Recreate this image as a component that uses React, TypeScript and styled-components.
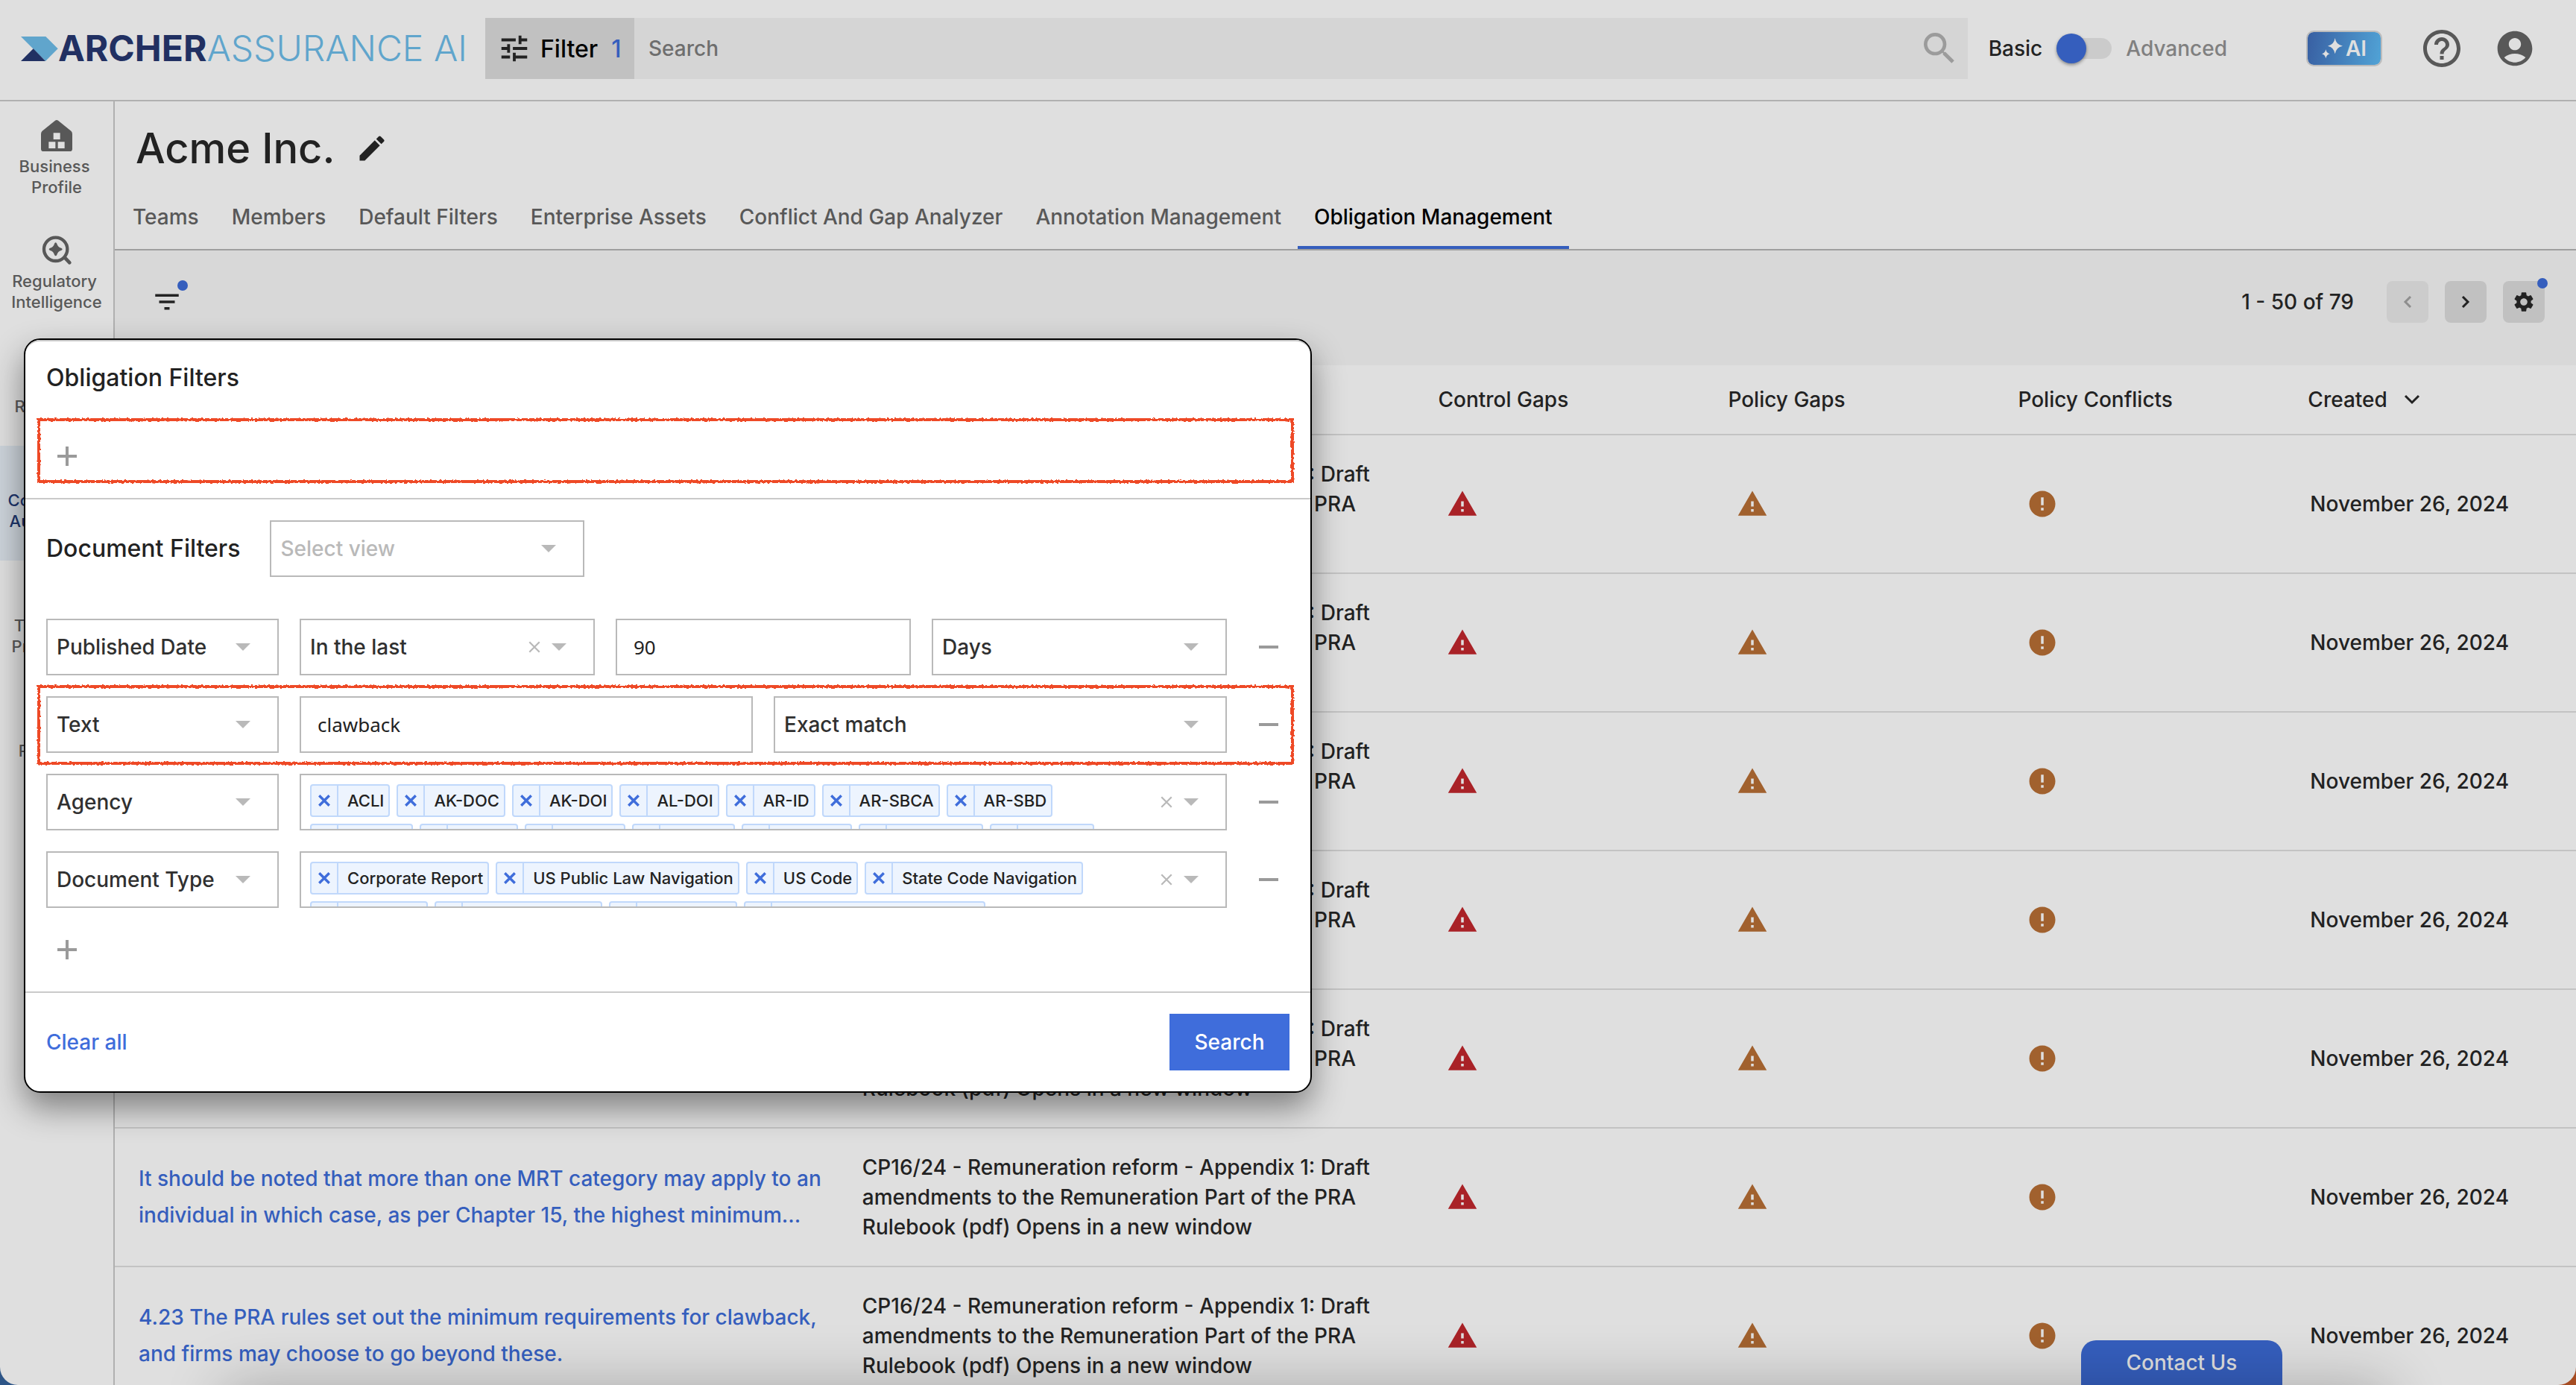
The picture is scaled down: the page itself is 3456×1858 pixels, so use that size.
import React from "react";
import styled, { createGlobalStyle, css } from "styled-components";
import {
  MdAccountCircle,
  MdEdit,
  MdError,
  MdFilterList,
  MdHelpOutline,
  MdSearch,
  MdSettings,
  MdTune,
  MdWarning,
} from "react-icons/md";
import { LuBookOpen, LuClipboardList, LuFileText, LuUsers } from "react-icons/lu";

const color = {
  page: "#dfdfdf",
  toolbar: "#d8d8d8",
  ink: "#222222",
  muted: "#585858",
  rule: "#c3c3c3",
  blue: "#355ebd",
  brightBlue: "#3f6ddb",
  red: "#a92227",
  amber: "#a1612e",
  field: "#b9b9b9",
  highlight: "#ee4a25",
};

const GlobalStyle = createGlobalStyle`
  *, *::before, *::after { box-sizing: border-box; }
  body {
    margin: 0;
    background: linear-gradient(90deg, #2d5587 0%, #2d5587 50%, #a64c22 50%, #a64c22 100%);
  }
  body, button, input, select {
    font-family: Inter, "Liberation Sans", sans-serif;
    font-size: 28px;
    font-weight: 500;
    color: ${color.ink};
  }
  button { border: 0; padding: 0; background: none; cursor: pointer; }
  svg { display: block; flex: none; }
`;

const Window = styled.div`
  position: relative;
  display: flex;
  flex-direction: column;
  height: 100vh;
  overflow: hidden;
  border-radius: 0 0 24px 24px;
  background: ${color.page};
`;

/* ---------- Header ---------- */

const Header = styled.header`
  display: flex;
  align-items: center;
  flex: none;
  padding: 24px 54px 28px 28px;
  border-bottom: 2px solid #b0b0b0;
`;

const Logo = styled.a`
  display: flex;
  align-items: center;
  flex: none;
  width: 623px;
  color: #60a5cc;
  font-size: 48px;
  font-weight: 300;
  line-height: 82px;
  text-decoration: none;
  white-space: nowrap;

  strong {
    color: #213062;
    font-weight: 700;
  }
`;

const SearchBar = styled.form`
  display: flex;
  flex: 1;
  height: 82px;
  background: #d5d5d5;
`;

const FilterButton = styled.button`
  display: flex;
  align-items: center;
  gap: 12px;
  width: 200px;
  padding-left: 16px;
  background: #c1c1c1;
  color: #000;
  font-size: 32px;

  span {
    margin-left: 6px;
    color: ${color.blue};
  }
`;

const SearchInput = styled.input`
  flex: 1;
  min-width: 0;
  padding: 0 19px;
  border: 0;
  background: none;

  &::placeholder {
    color: #6e6e6e;
    opacity: 1;
  }
`;

const SearchSubmit = styled.button`
  padding: 0 10px;
  color: #9b9b9b;
`;

const ModeSwitch = styled.label`
  display: flex;
  align-items: center;
  gap: 19px;
  margin: 0 106px 0 28px;
`;

const ModeName = styled.span<{ $active?: boolean }>`
  color: ${(p) => (p.$active ? color.ink : "#808080")};
`;

const Toggle = styled.input`
  appearance: none;
  display: flex;
  align-items: center;
  width: 74px;
  height: 28px;
  margin: 0;
  border-radius: 14px;
  background: #cbcbcb;

  &::before {
    content: "";
    width: 40px;
    height: 40px;
    border-radius: 50%;
    background: ${color.blue};
    box-shadow: 0 2px 4px rgba(0, 0, 0, 0.4);
  }
`;

const AiButton = styled.button`
  display: flex;
  align-items: center;
  justify-content: center;
  gap: 4px;
  width: 102px;
  height: 48px;
  border: 2px solid #bcbcbc;
  border-radius: 10px;
  background: linear-gradient(100deg, #385fa2, #51a3d6);
  background-clip: padding-box;
  color: ${color.page};
  font-weight: 600;
`;

const HeaderIcons = styled.div`
  display: flex;
  align-items: center;
  gap: 40px;
  margin-left: 50px;

  button { color: ${color.muted}; }
`;

/* ---------- Side navigation ---------- */

const Body = styled.div`
  display: flex;
  flex: 1;
  min-height: 0;
`;

const SideNav = styled.nav`
  flex: none;
  width: 154px;
  border-right: 2px solid #b0b0b0;
`;

const SideLink = styled.a<{ $active?: boolean }>`
  display: flex;
  flex-direction: column;
  align-items: center;
  justify-content: center;
  gap: 6px;
  height: 154px;
  background: ${(p) => (p.$active ? "#ccd3da" : "transparent")};
  color: ${(p) => (p.$active ? "#1d356b" : color.muted)};
  font-size: 22px;
  line-height: 28px;
  text-align: center;
  text-decoration: none;

  span {
    max-width: 148px;
    white-space: break-spaces;
  }
`;

/* ---------- Main area ---------- */

const Main = styled.main`
  flex: 1;
  min-width: 0;
`;

const TitleRow = styled.div`
  display: flex;
  align-items: center;
  gap: 28px;
  padding: 27px 28px 0;
`;

const Title = styled.h1`
  margin: 0;
  font-size: 56px;
  font-weight: 500;
  line-height: 72px;
`;

const Tabs = styled.nav`
  display: flex;
  padding: 36px 2px 0;
  border-bottom: 2px solid #9f9f9f;
`;

const Tab = styled.a<{ $active?: boolean }>`
  padding: 0 22px 19px;
  border-bottom: 4px solid ${(p) => (p.$active ? color.blue : "transparent")};
  color: ${(p) => (p.$active ? "#000" : color.muted)};
  line-height: 40px;
  text-decoration: none;
`;

const Toolbar = styled.div`
  display: flex;
  align-items: center;
  gap: 22px;
  padding: 41px 42px 57px 49px;
  background: ${color.toolbar};
`;

const IconButton = styled.button<{ $filled?: boolean }>`
  position: relative;
  display: flex;
  align-items: center;
  justify-content: center;
  width: ${(p) => (p.$filled ? 56 : 42)}px;
  height: 56px;
  border-radius: 8px;
  background: ${(p) => (p.$filled ? "#c1c1c1" : "none")};

  &:disabled {
    background: #cccccc;
    color: #8e8e8e;
  }
`;

const Dot = styled.i<{ $corner?: boolean }>`
  position: absolute;
  top: ${(p) => (p.$corner ? -4 : -1)}px;
  right: ${(p) => (p.$corner ? -4 : -7)}px;
  width: 14px;
  height: 14px;
  border-radius: 50%;
  background: ${color.blue};
`;

const PageRange = styled.span`
  margin: 0 22px 0 auto;
`;

const Table = styled.table`
  width: 100%;
  table-layout: fixed;
  border-collapse: separate;
  border-spacing: 0;

  th {
    height: 94px;
    padding: 0 16px 0 32px;
    border-bottom: 2px solid ${color.rule};
    font-weight: 500;
    text-align: left;
  }

  td {
    height: 186px;
    padding: 0 16px 0 32px;
    border-bottom: 2px solid ${color.rule};
    line-height: 40px;
  }
`;

const Col = styled.col<{ $share: string }>`
  width: ${(p) => p.$share};
`;

const SortButton = styled.button`
  display: flex;
  align-items: center;
  gap: 22px;
`;

const ObligationLink = styled.a`
  color: ${color.blue};
  line-height: 49px;
  text-decoration: none;
`;

const DocumentName = styled.div`
  max-width: 700px;
`;

const Severity = styled.span<{ $tone: string }>`
  display: block;
  margin-left: 12px;
  color: ${(p) => p.$tone};
`;

const CreatedDate = styled.time`
  margin-left: 3px;
`;

/* ---------- Filter dialog ---------- */

const Dialog = styled.section`
  position: absolute;
  top: 454px;
  left: 32px;
  width: 50%;
  border: 2px solid #000;
  border-radius: 22px;
  background: #fff;
  box-shadow: 0 20px 44px rgba(0, 0, 0, 0.43);
`;

const DialogSection = styled.div`
  padding: 28px;
  border-bottom: 2px solid #cacaca;

  &:first-child {
    border-top: 2px solid #cacaca;
    border-radius: 20px 20px 0 0;
  }
`;

const DialogHeading = styled.h2`
  margin: 0;
  font-size: 32px;
  font-weight: 500;
  line-height: 42px;
`;

const AddRow = styled.div<{ $spaced?: boolean }>`
  position: relative;
  display: flex;
  margin-top: ${(p) => (p.$spaced ? 56 : 28)}px;
`;

const ViewRow = styled.div`
  display: flex;
  align-items: center;
  gap: 40px;
  margin-bottom: 56px;
`;

const SmallButton = styled.button`
  display: flex;
  align-items: center;
  justify-content: center;
  width: 56px;
  height: 56px;
  color: #9a9a9a;
`;

const FilterRows = styled.div`
  display: flex;
  flex-direction: column;
  gap: 28px;
`;

const FilterRow = styled.div`
  position: relative;
  display: flex;
  align-items: center;
  gap: 28px;
`;

const Field = styled.div<{ $width?: string }>`
  display: flex;
  align-items: center;
  height: 76px;
  overflow: hidden;
  border: 2px solid ${color.field};
  color: ${color.field};
  ${(p) =>
    p.$width
      ? css`flex: none; width: ${p.$width};`
      : css`flex: 1; min-width: 0;`}
`;

const Select = styled.select<{ $placeholder?: boolean }>`
  appearance: none;
  flex: 1;
  min-width: 0;
  height: 72px;
  padding: 0 0 0 12px;
  border: 0;
  background: none;
  color: ${(p) => (p.$placeholder ? "#b9b9b9" : "#303030")};
`;

const TextInput = styled.input`
  width: 100%;
  height: 72px;
  padding: 0 22px;
  border: 0;
  background: none;
  font-family: "Noto Sans", sans-serif;
  font-size: 26px;
  font-weight: 400;
`;

const Clear = styled.button`
  margin-right: 14px;
  color: ${color.field};
`;

const Arrow = styled.i`
  width: 0;
  height: 0;
  margin-right: 36px;
  border: 10px solid transparent;
  border-top-color: ${color.field};
  border-bottom: 0;
`;

const Tags = styled.div`
  display: flex;
  flex: 1;
  flex-direction: column;
  gap: 9px;
  align-self: flex-start;
  min-width: 0;
  padding: 12px;
`;

const TagLine = styled.ul`
  display: flex;
  gap: 9px;
  margin: 0;
  padding: 0;
  list-style: none;
`;

const Tag = styled.li`
  display: flex;
  height: 44px;
  border: 2px solid #c0d8fb;
  border-radius: 4px;
  background: #edf4fe;
  color: ${color.ink};
  font-size: 22px;
  line-height: 40px;
  white-space: nowrap;

  span { padding: 0 6px 0 12px; }
`;

const TagRemove = styled.button`
  display: flex;
  align-items: center;
  justify-content: center;
  width: 36px;
  border-right: 2px solid #c0d8fb;
  color: ${color.brightBlue};
`;

const DialogFooter = styled.footer`
  display: flex;
  align-items: center;
  justify-content: space-between;
  padding: 28px;
`;

const ClearAll = styled.button`
  color: ${color.brightBlue};
`;

const SearchButton = styled.button`
  width: 161px;
  height: 76px;
  background: ${color.brightBlue};
  color: #fff;
`;

const Marker = styled.svg<{ $tall?: boolean }>`
  position: absolute;
  top: ${(p) => (p.$tall ? -15 : -23)}px;
  left: -12px;
  width: calc(100% + 18px);
  height: ${(p) => (p.$tall ? 107 : 87)}px;
  overflow: visible;
  pointer-events: none;
`;

/* ---------- Bottom edge ---------- */

const ContactButton = styled.button`
  position: absolute;
  right: 394px;
  bottom: 0;
  width: 270px;
  height: 60px;
  border-radius: 20px 20px 0 0;
  background: ${color.blue};
  color: ${color.page};
`;

const BottomShade = styled.div`
  position: absolute;
  right: 250px;
  bottom: -200px;
  left: 300px;
  height: 200px;
  box-shadow: 0 0 80px rgba(0, 0, 0, 0.24);
  pointer-events: none;
`;

/* ---------- Drawings ---------- */

const LogoMark = () => (
  <svg width="50" height="33" viewBox="0 0 150 99" aria-hidden="true">
    <path d="M0 0H100L149 49L99 99Z" fill="#60a5cc" />
    <path d="M50 49L99 99H0Z" fill="#213062" />
  </svg>
);

const HomeIcon = () => (
  <svg width="42" height="42" viewBox="0 0 126 126" aria-hidden="true">
    <path
      fill="currentColor"
      fillRule="evenodd"
      d="M57 2Q63 -2 69 2L121 44Q126 49 126 56V116Q126 126 116 126H10Q0 126 0 116V56Q0 49 5 44ZM50 52V78H77V52ZM31 88V114H58V88ZM68 88V114H95V88Z"
    />
  </svg>
);

const IntelligenceIcon = () => (
  <svg width="42" height="42" viewBox="0 0 126 126" fill="none" aria-hidden="true">
    <circle cx="59" cy="58" r="47" stroke="currentColor" strokeWidth="13" />
    <path d="M95 91L115 112" stroke="currentColor" strokeWidth="14" strokeLinecap="round" />
    <path
      fill="currentColor"
      d="M59 31Q62 31 64 36Q68 50 81 53Q86 55 86 58Q86 61 81 63Q68 67 64 80Q62 85 59 85Q56 85 54 80Q50 67 37 63Q32 61 32 58Q32 55 37 53Q50 50 54 36Q56 31 59 31Z"
    />
  </svg>
);

const SparkleIcon = () => (
  <svg width="28" height="28" viewBox="0 0 84 84" fill="currentColor" aria-hidden="true">
    <path d="M53 0Q57 27 84 32Q57 37 53 64Q49 37 24 32Q49 27 53 0Z" />
    <path d="M16 46Q19 61 32 64Q19 67 16 82Q13 67 0 64Q13 61 16 46Z" />
  </svg>
);

const Chevron = ({ d, w, h }: { d: string; w: number; h: number }) => (
  <svg width={w} height={h} viewBox={`0 0 ${w} ${h}`} fill="none" aria-hidden="true">
    <path d={d} stroke="currentColor" strokeWidth="3" />
  </svg>
);

const CrossIcon = ({ size, weight }: { size: number; weight: number }) => (
  <svg width={size} height={size} viewBox="0 0 16 16" fill="none" aria-hidden="true">
    <path d="M2 2L14 14M14 2L2 14" stroke="currentColor" strokeWidth={weight} />
  </svg>
);

const PlusIcon = () => (
  <svg width="26" height="26" viewBox="0 0 26 26" fill="none" aria-hidden="true">
    <path d="M0 13H26M13 0V26" stroke="currentColor" strokeWidth="4" />
  </svg>
);

const MinusIcon = () => (
  <svg width="26" height="4" viewBox="0 0 26 4" fill="none" aria-hidden="true">
    <path d="M0 2H26" stroke="currentColor" strokeWidth="4" />
  </svg>
);

const RoughMarker = ({ id, tall }: { id: string; tall?: boolean }) => (
  <Marker $tall={tall} aria-hidden="true">
    <filter id={id} x="-2%" y="-10%" width="104%" height="120%">
      <feTurbulence type="fractalNoise" baseFrequency="0.3" numOctaves="2" seed="4" />
      <feDisplacementMap
        in="SourceGraphic"
        scale="4"
        xChannelSelector="R"
        yChannelSelector="G"
      />
    </filter>
    <rect
      x="2"
      y="2"
      width="calc(100% - 4px)"
      height={tall ? 103 : 83}
      fill="none"
      stroke={color.highlight}
      strokeWidth="4"
      filter={`url(#${id})`}
    />
  </Marker>
);

/* ---------- Data ---------- */

const sideItems = [
  { label: "Business Profile", icon: <HomeIcon /> },
  { label: "Regulatory Intelligence", icon: <IntelligenceIcon /> },
  { label: "Repository", icon: <LuBookOpen size={42} /> },
  { label: "Compliance Automation Tools", icon: <LuClipboardList size={42} />, active: true },
  { label: "Templates Procedures", icon: <LuUsers size={42} /> },
  { label: "Reporting", icon: <LuFileText size={42} /> },
];

const tabs = [
  "Teams",
  "Members",
  "Default Filters",
  "Enterprise Assets",
  "Conflict And Gap Analyzer",
  "Annotation Management",
  "Obligation Management",
];

const documentName =
  "CP16/24 - Remuneration reform - Appendix 1: Draft amendments to the Remuneration Part of the PRA Rulebook (pdf) Opens in a new window";

const mrtNote =
  "It should be noted that more than one MRT category may apply to an individual in which case, as per Chapter 15, the highest minimum...";

const clawbackNote =
  "4.23 The PRA rules set out the minimum requirements for clawback, and firms may choose to go beyond these.";

const obligations = [mrtNote, clawbackNote, mrtNote, clawbackNote, mrtNote, mrtNote, clawbackNote];

const agencies = [
  ["ACLI", "AK-DOC", "AK-DOI", "AL-DOI", "AR-ID", "AR-SBCA", "AR-SBD"],
  ["AZ-DIFI", "AZ-DFI", "AZ-DOI", "CA-DOI", "CA-DFPI", "CA-DMHC", "CO-DOI"],
];

const documentTypes = [
  ["Corporate Report", "US Public Law Navigation", "US Code", "State Code Navigation"],
  ["Guidance", "Final Regulation", "Legislation", "State Register Navigation"],
];

/* ---------- Parts ---------- */

function SelectField({
  label,
  value,
  width,
  placeholder,
  clearable,
}: {
  label: string;
  value: string;
  width?: string;
  placeholder?: boolean;
  clearable?: boolean;
}) {
  return (
    <Field $width={width}>
      <Select aria-label={label} $placeholder={placeholder} defaultValue={value}>
        <option>{value}</option>
      </Select>
      {clearable && (
        <Clear type="button" aria-label={`Clear ${label}`}>
          <CrossIcon size={18} weight={2} />
        </Clear>
      )}
      <Arrow />
    </Field>
  );
}

function TagField({ label, lines }: { label: string; lines: string[][] }) {
  return (
    <Field role="group" aria-label={label}>
      <Tags>
        {lines.map((line) => (
          <TagLine key={line[0]}>
            {line.map((name) => (
              <Tag key={name}>
                <TagRemove type="button" aria-label={`Remove ${name}`}>
                  <CrossIcon size={18} weight={3} />
                </TagRemove>
                <span>{name}</span>
              </Tag>
            ))}
          </TagLine>
        ))}
      </Tags>
      <Clear type="button" aria-label={`Clear ${label}`}>
        <CrossIcon size={18} weight={2} />
      </Clear>
      <Arrow />
    </Field>
  );
}

const RemoveRow = () => (
  <SmallButton type="button" aria-label="Remove filter">
    <MinusIcon />
  </SmallButton>
);

function FilterDialog() {
  return (
    <Dialog role="dialog" aria-label="Filters">
      <DialogSection>
        <DialogHeading>Obligation Filters</DialogHeading>
        <AddRow $spaced>
          <SmallButton type="button" aria-label="Add obligation filter">
            <PlusIcon />
          </SmallButton>
          <RoughMarker id="rough-add" />
        </AddRow>
      </DialogSection>
      <DialogSection>
        <ViewRow>
          <DialogHeading>Document Filters</DialogHeading>
          <SelectField label="View" value="Select view" width="422px" placeholder />
        </ViewRow>
        <FilterRows>
          <FilterRow>
            <SelectField label="Filter field" value="Published Date" width="312px" />
            <SelectField label="Range" value="In the last" clearable />
            <Field>
              <TextInput aria-label="Amount" defaultValue="90" />
            </Field>
            <SelectField label="Unit" value="Days" />
            <RemoveRow />
          </FilterRow>
          <FilterRow>
            <SelectField label="Filter field" value="Text" width="312px" />
            <Field>
              <TextInput aria-label="Search text" defaultValue="clawback" />
            </Field>
            <SelectField label="Match type" value="Exact match" />
            <RemoveRow />
            <RoughMarker id="rough-text" tall />
          </FilterRow>
          <FilterRow>
            <SelectField label="Filter field" value="Agency" width="312px" />
            <TagField label="Agencies" lines={agencies} />
            <RemoveRow />
          </FilterRow>
          <FilterRow>
            <SelectField label="Filter field" value="Document Type" width="312px" />
            <TagField label="Document types" lines={documentTypes} />
            <RemoveRow />
          </FilterRow>
        </FilterRows>
        <AddRow>
          <SmallButton type="button" aria-label="Add document filter">
            <PlusIcon />
          </SmallButton>
        </AddRow>
      </DialogSection>
      <DialogFooter>
        <ClearAll type="button">Clear all</ClearAll>
        <SearchButton type="button">Search</SearchButton>
      </DialogFooter>
    </Dialog>
  );
}

export default function App() {
  return (
    <>
      <GlobalStyle />
      <Window>
        <Header>
          <Logo href="#home">
            <LogoMark />
            <strong>ARCHER</strong>ASSURANCE AI
          </Logo>
          <SearchBar>
            <FilterButton type="button">
              <MdTune size={46} color="#222" />
              Filter <span>1</span>
            </FilterButton>
            <SearchInput aria-label="Search" placeholder="Search" />
            <SearchSubmit type="button" aria-label="Run search">
              <MdSearch size={56} />
            </SearchSubmit>
          </SearchBar>
          <ModeSwitch>
            <ModeName $active>Basic</ModeName>
            <Toggle type="checkbox" role="switch" />
            <ModeName>Advanced</ModeName>
          </ModeSwitch>
          <AiButton type="button">
            <SparkleIcon />
            AI
          </AiButton>
          <HeaderIcons>
            <button type="button" aria-label="Help">
              <MdHelpOutline size={60} />
            </button>
            <button type="button" aria-label="Account">
              <MdAccountCircle size={56} />
            </button>
          </HeaderIcons>
        </Header>
        <Body>
          <SideNav>
            {sideItems.map((item) => (
              <SideLink key={item.label} href="#section" $active={item.active}>
                {item.icon}
                <span>{item.label}</span>
              </SideLink>
            ))}
          </SideNav>
          <Main>
            <TitleRow>
              <Title>Acme Inc.</Title>
              <button type="button" aria-label="Edit name">
                <MdEdit size={44} />
              </button>
            </TitleRow>
            <Tabs>
              {tabs.map((name) => (
                <Tab key={name} href="#tab" $active={name === "Obligation Management"}>
                  {name}
                </Tab>
              ))}
            </Tabs>
            <Toolbar>
              <IconButton type="button" aria-label="Filters">
                <MdFilterList size={42} />
                <Dot />
              </IconButton>
              <PageRange>1 - 50 of 79</PageRange>
              <IconButton type="button" $filled disabled aria-label="Previous page">
                <Chevron w={12} h={16} d="M10 1L3 8L10 15" />
              </IconButton>
              <IconButton type="button" $filled aria-label="Next page">
                <Chevron w={12} h={16} d="M2 1L9 8L2 15" />
              </IconButton>
              <IconButton type="button" $filled aria-label="Settings">
                <MdSettings size={32} />
                <Dot $corner />
              </IconButton>
            </Toolbar>
            <Table>
              <colgroup>
                <Col $share="29.4%" />
                <Col $share="23.4%" />
                <Col $share="11.78%" />
                <Col $share="11.78%" />
                <Col $share="11.78%" />
                <Col $share="auto" />
              </colgroup>
              <thead>
                <tr>
                  <th>Obligation</th>
                  <th>Document</th>
                  <th>Control Gaps</th>
                  <th>Policy Gaps</th>
                  <th>Policy Conflicts</th>
                  <th>
                    <SortButton type="button">
                      Created
                      <Chevron w={22} h={14} d="M2 2L11 11L20 2" />
                    </SortButton>
                  </th>
                </tr>
              </thead>
              <tbody>
                {obligations.map((text, i) => (
                  <tr key={i}>
                    <td>
                      <ObligationLink href="#obligation">{text}</ObligationLink>
                    </td>
                    <td>
                      <DocumentName>{documentName}</DocumentName>
                    </td>
                    <td>
                      <Severity $tone={color.red} role="img" aria-label="High">
                        <MdWarning size={42} />
                      </Severity>
                    </td>
                    <td>
                      <Severity $tone={color.amber} role="img" aria-label="Medium">
                        <MdWarning size={42} />
                      </Severity>
                    </td>
                    <td>
                      <Severity $tone={color.amber} role="img" aria-label="Medium">
                        <MdError size={42} />
                      </Severity>
                    </td>
                    <td>
                      <CreatedDate dateTime="2024-11-26">November 26, 2024</CreatedDate>
                    </td>
                  </tr>
                ))}
              </tbody>
            </Table>
          </Main>
        </Body>
        <ContactButton type="button">Contact Us</ContactButton>
        <BottomShade />
        <FilterDialog />
      </Window>
    </>
  );
}
